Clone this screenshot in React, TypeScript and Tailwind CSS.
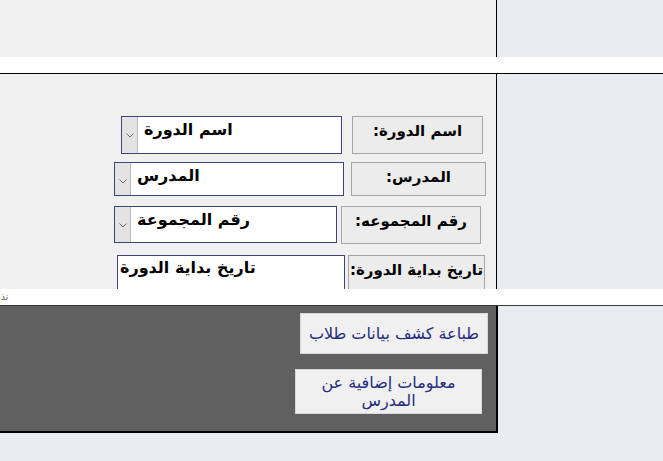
const arabic = { fontFamily: '"DejaVu Sans", "Liberation Sans", sans-serif' };

function Chevron() {
  return (
    <svg width="8" height="5" viewBox="0 0 8 5" className="mt-[16px]">
      <path d="M0.5 0.5 L4 4 L7.5 0.5" fill="none" stroke="#6b6b6b" strokeWidth="1" />
    </svg>
  );
}

function Combo({ text, w, h }: { text: string; w: string; h: string }) {
  return (
    <div className={`flex ${w} ${h} bg-white border border-[#3a4578]`}>
      <div className="flex w-[16px] justify-center bg-[#e3e3e3] border-r border-[#b8b8b8]">
        <Chevron />
      </div>
      <span className="pl-[6px] pt-[3px] text-[16px] font-bold text-black leading-[20px]" dir="rtl">
        {text}
      </span>
    </div>
  );
}

function Label({ text, w, h }: { text: string; w: string; h: string }) {
  return (
    <div
      className={`flex ${w} ${h} justify-center pt-[4px] bg-[#ececec] border border-[#a6a6a6] text-[15px] font-bold text-black leading-[20px]`}
      dir="rtl"
    >
      {text}
    </div>
  );
}

export default function App() {
  return (
    <div className="flex flex-col h-[461px] w-[663px] bg-[#e8ebef] overflow-hidden" style={arabic}>
      <div className="flex h-[57px]">
        <div className="w-[497px] bg-[#f0f0f0] border-r border-black" />
        <div className="flex-1" />
      </div>
      <div className="h-[16px] bg-white" />
      <div className="flex h-[216px] border-t border-black">
        <div className="flex flex-col w-[497px] bg-[#f0f0f0] border-r border-black overflow-hidden">
          <div className="flex mt-[42px] ml-[121px] gap-[10px]">
            <Combo text="اسم الدورة" w="w-[221px]" h="h-[38px]" />
            <Label text="اسم الدورة:" w="w-[131px]" h="h-[38px]" />
          </div>
          <div className="flex mt-[8px] ml-[114px] gap-[7px]">
            <Combo text="المدرس" w="w-[230px]" h="h-[34px]" />
            <Label text="المدرس:" w="w-[135px]" h="h-[34px]" />
          </div>
          <div className="flex mt-[10px] ml-[114px] gap-[4px]">
            <Combo text="رقم المجموعة" w="w-[223px]" h="h-[37px]" />
            <Label text="رقم المجموعه:" w="w-[140px]" h="h-[38px]" />
          </div>
          <div className="flex mt-[11px] ml-[117px] gap-[3px]">
            <div className="w-[228px] h-[42px] shrink-0 bg-white border border-[#3a4578] pl-[2px] pt-[2px] text-[16px] font-bold leading-[20px]" dir="rtl">
              <div className="text-left">تاريخ بداية الدورة</div>
            </div>
            <Label text="تاريخ بداية الدورة:" w="w-[137px] shrink-0" h="h-[42px]" />
          </div>
        </div>
        <div className="flex-1" />
      </div>
      <div className="h-[16px] bg-white">
        <div className="pl-[1px] text-[9px] text-[#555] leading-[16px]" dir="ltr">
          تذ
        </div>
      </div>
      <div className="flex h-[128px] border-t border-[#3c3c3c]">
        <div className="flex flex-col w-[498px] bg-[#606060] border-r-2 border-b-2 border-black">
          <button
            className="flex mt-[7px] ml-[300px] w-[188px] h-[41px] items-center justify-center bg-[#f0f0f0] border border-[#d8d8d8] text-[16px] text-[#252d80]"
            dir="rtl"
          >
            طباعة كشف بيانات طلاب
          </button>
          <button
            className="flex mt-[15px] ml-[295px] w-[187px] h-[45px] items-center justify-center bg-[#f0f0f0] border border-[#d8d8d8] text-[16px] leading-[18px] text-[#252d80] text-center"
            dir="rtl"
          >
            معلومات إضافية عن
            <br />
            المدرس
          </button>
        </div>
        <div className="flex-1" />
      </div>
    </div>
  );
}
